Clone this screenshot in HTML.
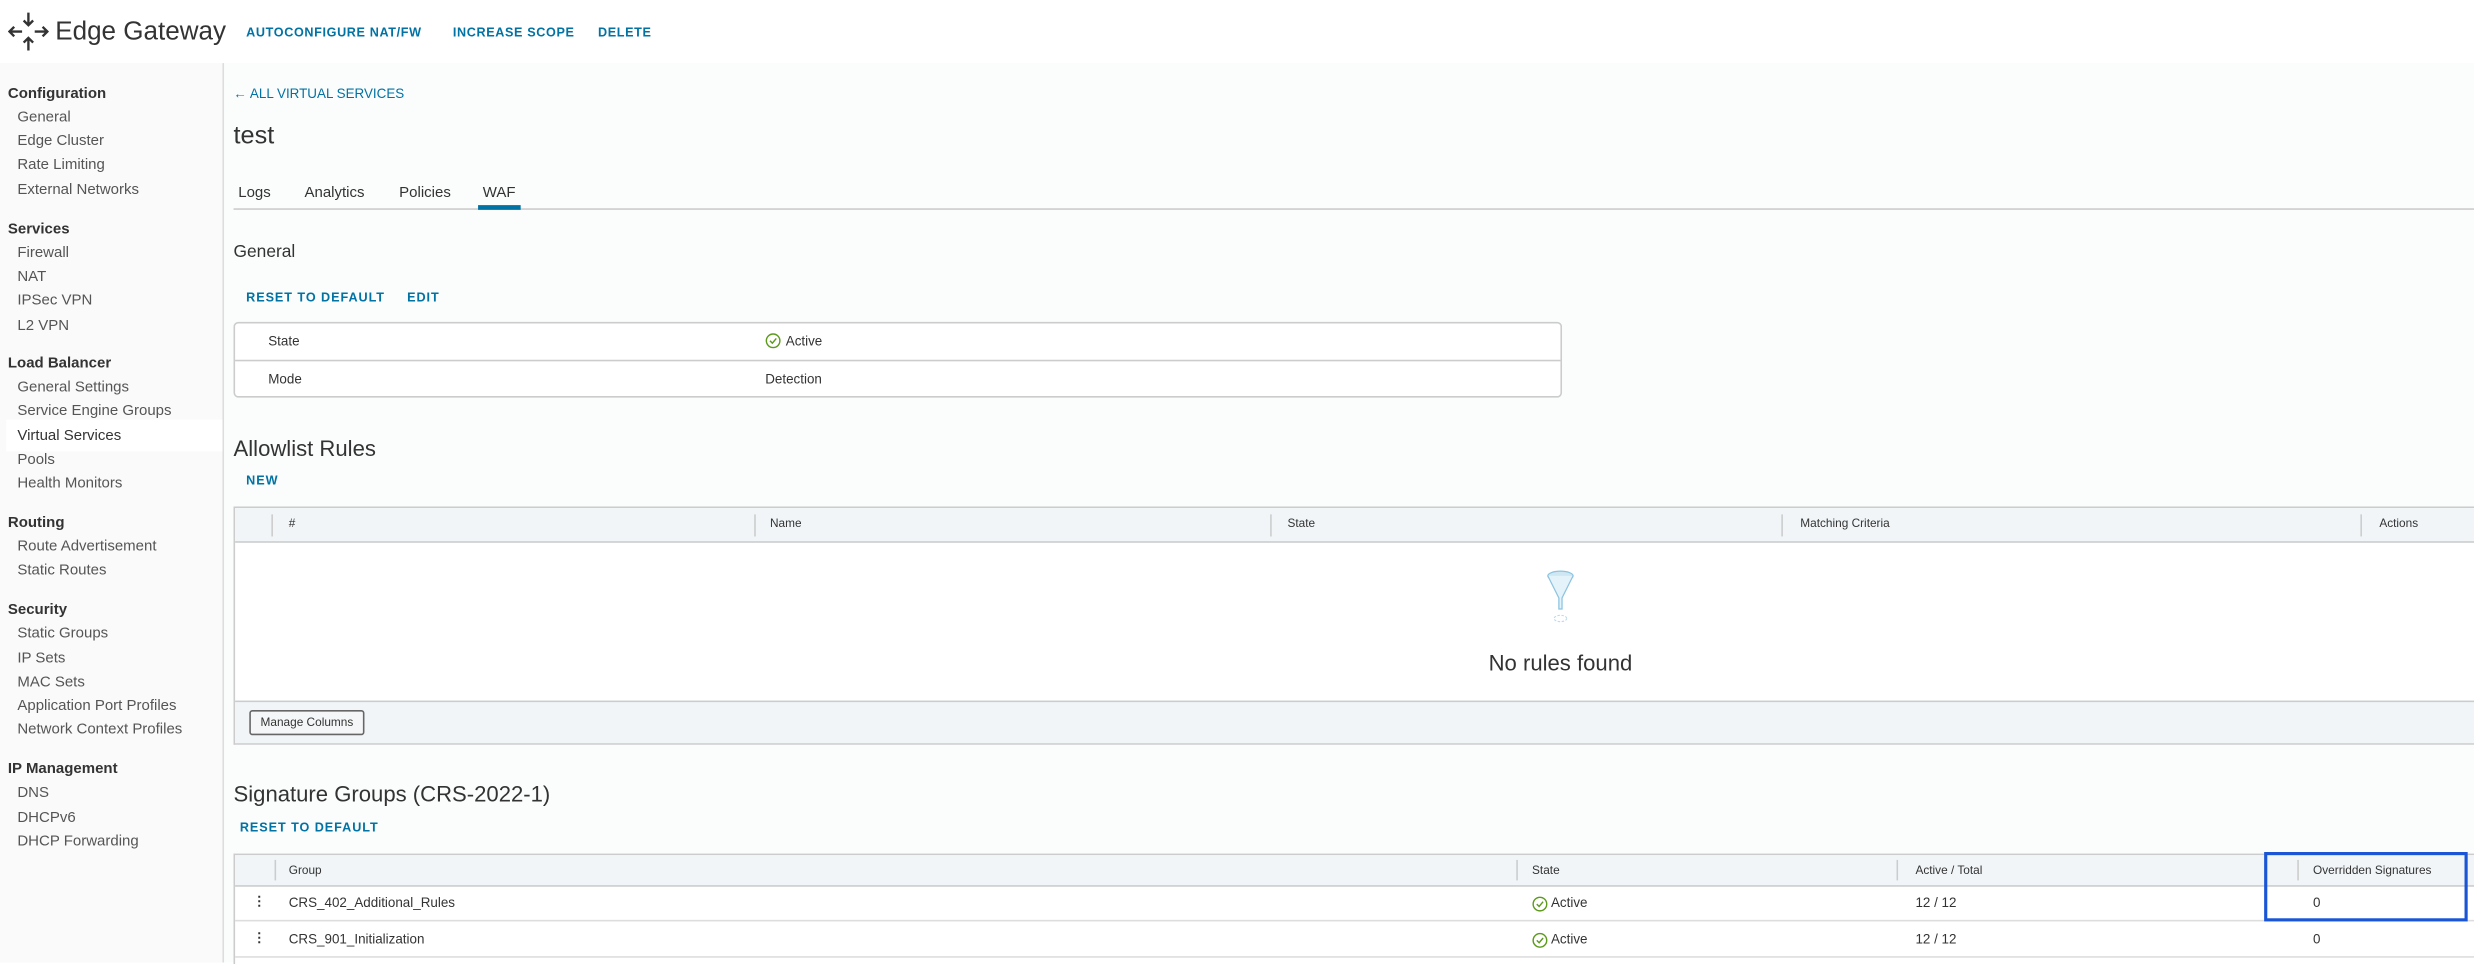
<!DOCTYPE html>
<html><head><style>
html,body{margin:0;padding:0;width:2474px;height:962px;overflow:hidden;background:#fff}
#w{position:absolute;left:0;top:0;width:1568px;height:610px;transform:scale(1.5778);transform-origin:0 0;font-family:"Liberation Sans",sans-serif;color:#333}
.a{position:absolute;white-space:nowrap}
.lnk{color:#0072a3;font-size:8px;font-weight:bold;letter-spacing:.6px}
.nh{font-size:9.5px;font-weight:bold;color:#333;left:5px}
.ni{font-size:9.5px;color:#555;left:11px}
.th{font-size:7.5px;color:#333}
.td{font-size:8.5px;color:#333}
</style></head><body><div id="w">
<div class="a" style="left:0;top:40px;width:141px;height:570px;background:#fafafa;border-right:1px solid #ddd"></div>
<div class="a" style="left:142px;top:40px;width:1426px;height:570px;background:#fbfcfc"></div>
<div class="a" style="left:4px;top:266px;width:137px;height:20px;background:#fff"></div>
<svg class="a" style="left:5px;top:7px" width="26" height="26" viewBox="0 0 26 26" fill="none" stroke="#333" stroke-width="1.5"><path d="M13 1v8M10 6l3 3 3-3M13 25v-8M10 20l3-3 3 3M1 13h8M4 10l-3 3 3 3M25 13h-8M22 10l3 3-3 3"/></svg>
<div class="a" style="left:35px;top:11px;font-size:16.5px;color:#333">Edge Gateway</div>
<div class="a lnk" style="left:156px;top:16px;font-size:8px;letter-spacing:.4px">AUTOCONFIGURE NAT/FW</div>
<div class="a lnk" style="left:287px;top:16px;font-size:8px;letter-spacing:.4px">INCREASE SCOPE</div>
<div class="a lnk" style="left:379px;top:16px;font-size:8px;letter-spacing:.4px">DELETE</div>

<div class="a nh" style="top:54px">Configuration</div>
<div class="a ni" style="top:69px">General</div>
<div class="a ni" style="top:84px">Edge Cluster</div>
<div class="a ni" style="top:99px">Rate Limiting</div>
<div class="a ni" style="top:115px">External Networks</div>
<div class="a nh" style="top:140px">Services</div>
<div class="a ni" style="top:155px">Firewall</div>
<div class="a ni" style="top:170px">NAT</div>
<div class="a ni" style="top:185px">IPSec VPN</div>
<div class="a ni" style="top:201px">L2 VPN</div>
<div class="a nh" style="top:225px">Load Balancer</div>
<div class="a ni" style="top:240px">General Settings</div>
<div class="a ni" style="top:255px">Service Engine Groups</div>
<div class="a ni" style="top:271px;color:#333">Virtual Services</div>
<div class="a ni" style="top:286px">Pools</div>
<div class="a ni" style="top:301px">Health Monitors</div>
<div class="a nh" style="top:326px">Routing</div>
<div class="a ni" style="top:341px">Route Advertisement</div>
<div class="a ni" style="top:356px">Static Routes</div>
<div class="a nh" style="top:381px">Security</div>
<div class="a ni" style="top:396px">Static Groups</div>
<div class="a ni" style="top:412px">IP Sets</div>
<div class="a ni" style="top:427px">MAC Sets</div>
<div class="a ni" style="top:442px">Application Port Profiles</div>
<div class="a ni" style="top:457px">Network Context Profiles</div>
<div class="a nh" style="top:482px">IP Management</div>
<div class="a ni" style="top:497px">DNS</div>
<div class="a ni" style="top:513px">DHCPv6</div>
<div class="a ni" style="top:528px">DHCP Forwarding</div>

<div class="a" style="left:148px;top:54px;font-size:8.5px;color:#0072a3">← ALL VIRTUAL SERVICES</div>
<div class="a" style="left:148px;top:78px;font-size:16px;color:#333">test</div>
<div class="a" style="left:148px;top:132px;width:1420px;height:1px;background:#ccc"></div>
<div class="a td" style="left:151px;top:117px;font-size:9.5px">Logs</div>
<div class="a td" style="left:193px;top:117px;font-size:9.5px">Analytics</div>
<div class="a td" style="left:253px;top:117px;font-size:9.5px">Policies</div>
<div class="a td" style="left:306px;top:117px;font-size:9.5px">WAF</div>
<div class="a" style="left:303px;top:130px;width:27px;height:2.5px;background:#0072a3"></div>

<div class="a" style="left:148px;top:154px;font-size:11px">General</div>
<div class="a lnk" style="left:156px;top:184px">RESET TO DEFAULT</div>
<div class="a lnk" style="left:258px;top:184px">EDIT</div>
<div class="a" style="left:148px;top:204px;width:840px;height:46px;border:1px solid #ccc;border-radius:3px;background:#fff"></div>
<div class="a" style="left:149px;top:228px;width:840px;height:1px;background:#ccc"></div>
<div class="a td" style="left:170px;top:211px">State</div>
<svg class="a" style="left:485px;top:211px" width="10" height="10" viewBox="0 0 10 10"><circle cx="5" cy="5" r="4.3" fill="none" stroke="#5c9a1c" stroke-width="0.9"/><path d="M3 5l1.5 1.5L7 3.5" fill="none" stroke="#5c9a1c" stroke-width="0.9"/></svg>
<div class="a td" style="left:498px;top:211px">Active</div>
<div class="a td" style="left:170px;top:235px">Mode</div>
<div class="a td" style="left:485px;top:235px">Detection</div>

<div class="a" style="left:148px;top:276px;font-size:14px">Allowlist Rules</div>
<div class="a lnk" style="left:156px;top:300px">NEW</div>
<div class="a" style="left:148px;top:321px;width:1420px;height:149px;border:1px solid #ccc;border-right:none;background:#fff"></div>
<div class="a" style="left:149px;top:322px;width:1419px;height:21px;background:#f1f5f8;border-bottom:1px solid #ccc"></div>
<div class="a" style="left:172px;top:326px;width:1px;height:14px;background:#ccc"></div>
<div class="a" style="left:478px;top:326px;width:1px;height:14px;background:#ccc"></div>
<div class="a" style="left:805px;top:326px;width:1px;height:14px;background:#ccc"></div>
<div class="a" style="left:1129px;top:326px;width:1px;height:14px;background:#ccc"></div>
<div class="a" style="left:1496px;top:326px;width:1px;height:14px;background:#ccc"></div>
<div class="a th" style="left:183px;top:327px">#</div>
<div class="a th" style="left:488px;top:327px">Name</div>
<div class="a th" style="left:816px;top:327px">State</div>
<div class="a th" style="left:1141px;top:327px">Matching Criteria</div>
<div class="a th" style="left:1508px;top:327px">Actions</div>
<svg class="a" style="left:975px;top:361px" width="28" height="36" viewBox="0 0 28 36"><ellipse cx="14" cy="4" rx="8" ry="3" fill="#cfe6f3" stroke="#8cc4e0" stroke-width="0.8"/><path d="M6 4l7 14v7h2v-7l7-14" fill="#e4f2f9" stroke="#8cc4e0" stroke-width="0.8"/><ellipse cx="14" cy="31" rx="4" ry="2" fill="none" stroke="#b8dcef" stroke-width="0.7" stroke-dasharray="1.5 1"/></svg>
<div class="a" style="left:889px;top:412px;width:200px;text-align:center;font-size:14px;color:#333">No rules found</div>
<div class="a" style="left:149px;top:444px;width:1419px;height:26px;background:#f1f5f8;border-top:1px solid #ccc"></div>
<div class="a" style="left:158px;top:450px;width:71px;height:14px;border:1px solid #666;border-radius:2px;background:#f4f6f8;font-size:7.5px;line-height:14px;text-align:center;color:#333">Manage Columns</div>

<div class="a" style="left:148px;top:495px;font-size:14px">Signature Groups (CRS-2022-1)</div>
<div class="a lnk" style="left:152px;top:520px">RESET TO DEFAULT</div>
<div class="a" style="left:148px;top:541px;width:1420px;height:69px;border-left:1px solid #ccc;border-top:1px solid #ccc;background:#fff"></div>
<div class="a" style="left:149px;top:542px;width:1419px;height:19px;background:#f1f5f8;border-bottom:1px solid #ccc"></div>
<div class="a" style="left:149px;top:583px;width:1419px;height:1px;background:#ddd"></div>
<div class="a" style="left:149px;top:606px;width:1419px;height:1px;background:#ddd"></div>
<div class="a" style="left:174px;top:545px;width:1px;height:13px;background:#ccc"></div>
<div class="a" style="left:961px;top:545px;width:1px;height:13px;background:#ccc"></div>
<div class="a" style="left:1202px;top:545px;width:1px;height:13px;background:#ccc"></div>
<div class="a" style="left:1456px;top:545px;width:1px;height:13px;background:#ccc"></div>
<div class="a th" style="left:183px;top:547px">Group</div>
<div class="a th" style="left:971px;top:547px">State</div>
<div class="a th" style="left:1214px;top:547px">Active / Total</div>
<div class="a th" style="left:1466px;top:547px">Overridden Signatures</div>
<div class="a td" style="left:160px;top:566px;font-weight:bold">⋮</div>
<div class="a td" style="left:183px;top:567px">CRS_402_Additional_Rules</div>
<svg class="a" style="left:971px;top:568px" width="10" height="10" viewBox="0 0 10 10"><circle cx="5" cy="5" r="4.3" fill="none" stroke="#5c9a1c" stroke-width="0.9"/><path d="M3 5l1.5 1.5L7 3.5" fill="none" stroke="#5c9a1c" stroke-width="0.9"/></svg>
<div class="a td" style="left:983px;top:567px">Active</div>
<div class="a td" style="left:1214px;top:567px">12 / 12</div>
<div class="a td" style="left:1466px;top:567px">0</div>
<div class="a td" style="left:160px;top:589px;font-weight:bold">⋮</div>
<div class="a td" style="left:183px;top:590px">CRS_901_Initialization</div>
<svg class="a" style="left:971px;top:591px" width="10" height="10" viewBox="0 0 10 10"><circle cx="5" cy="5" r="4.3" fill="none" stroke="#5c9a1c" stroke-width="0.9"/><path d="M3 5l1.5 1.5L7 3.5" fill="none" stroke="#5c9a1c" stroke-width="0.9"/></svg>
<div class="a td" style="left:983px;top:590px">Active</div>
<div class="a td" style="left:1214px;top:590px">12 / 12</div>
<div class="a td" style="left:1466px;top:590px">0</div>
<div class="a" style="left:1435px;top:540px;width:125px;height:40px;border:2px solid #1a55d6"></div>
</div></body></html>
